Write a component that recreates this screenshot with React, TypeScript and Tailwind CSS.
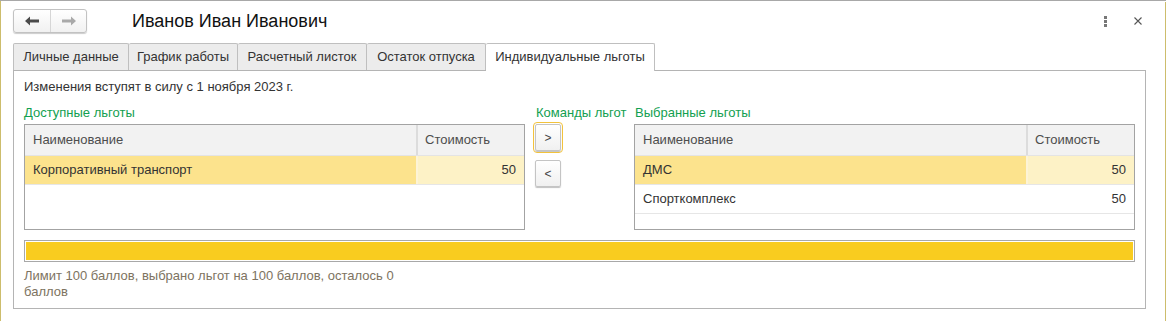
import React from "react";

const font = "font-['Liberation_Sans',Arial,sans-serif]";

function BackIcon({ color }: { color: string }) {
  return (
    <svg width="14" height="10" viewBox="0 0 14 10">
      <path d="M0 5 L5 0.5 L5 3.5 L14 3.5 L14 6.5 L5 6.5 L5 9.5 Z" fill={color} />
    </svg>
  );
}
function FwdIcon({ color }: { color: string }) {
  return (
    <svg width="14" height="10" viewBox="0 0 14 10">
      <path d="M14 5 L9 0.5 L9 3.5 L0 3.5 L0 6.5 L9 6.5 L9 9.5 Z" fill={color} />
    </svg>
  );
}

const tabs = [
  { t: "Личные данные", w: "w-[116px]" },
  { t: "График работы", w: "w-[109px]" },
  { t: "Расчетный листок", w: "w-[129px]" },
  { t: "Остаток отпуска", w: "w-[119px]" },
];

type Row = { name: string; cost: string; sel?: boolean };

function Table({ rows }: { rows: Row[] }) {
  return (
    <div className="w-[501px] h-[106px] border border-[#a3a3a3] bg-white flex flex-col">
      <div className="flex h-[31px] bg-[#f2f2f2] border-b border-[#e4e4e4] text-[#4d4d4d]">
        <div className="w-[393px] pl-[8px] flex items-center border-r-2 border-[#dcdcdc]">Наименование</div>
        <div className="flex-1 pl-[7px] flex items-center">Стоимость</div>
      </div>
      {rows.map((r, i) => (
        <div key={i} className="flex h-[29px] border-b border-[#e6e6e6] text-[#333]">
          <div className={`w-[393px] pl-[8px] flex items-center border-r-2 ${r.sel ? "bg-[#fce38d] border-[#fdf4d6]" : "bg-white border-white"}`}>{r.name}</div>
          <div className={`flex-1 pr-[8px] flex items-center justify-end ${r.sel ? "bg-[#fdf2c6]" : "bg-white"}`}>{r.cost}</div>
        </div>
      ))}
    </div>
  );
}

function SmallBtn({ label, focus }: { label: string; focus?: boolean }) {
  return (
    <div
      className={`w-[26px] h-[27px] rounded-[2px] border border-[#c4c4c4] bg-gradient-to-b from-white to-[#f0f0f0] shadow-[0_1px_1px_rgba(0,0,0,0.25)] flex items-center justify-center text-[#444] text-[12px] ${
        focus ? "outline outline-1 outline-[#f2c23c] outline-offset-[1px]" : ""
      }`}
    >
      {label}
    </div>
  );
}

export default function App() {
  return (
    <div className={`${font} text-[13px] w-[1166px] h-[321px] bg-white relative overflow-hidden`}>
      <div className="absolute left-0 top-0 w-[1166px] h-px bg-[#a8a8a8]" />
      <div className="absolute left-0 top-px w-px h-[320px] bg-[#cdbd6c]" />
      <div className="absolute left-[1165px] top-[2px] w-px h-[319px] bg-[#cdbd6c]" />

      <div className="flex flex-col">
        {/* header */}
        <div className="h-[43px] pt-[9px] flex items-start">
          <div className="ml-[13px] flex h-[24px] rounded-[3px] border border-[#c2c2c2] bg-gradient-to-b from-white to-[#f1f1f1] shadow-[0_1px_1px_rgba(0,0,0,0.2)]">
            <div className="w-[37px] flex items-center justify-center border-r border-[#d6d6d6]">
              <BackIcon color="#4a4a4a" />
            </div>
            <div className="w-[35px] flex items-center justify-center">
              <FwdIcon color="#a9a9a9" />
            </div>
          </div>
          <div className="ml-[45px] h-[24px] flex items-center text-[18px] text-[#111]">Иванов Иван Иванович</div>
          <div className="flex-1" />
          <div className="h-[24px] flex flex-col items-center justify-center gap-[1px] mr-[27px]">
            <div className="w-[3px] h-[3px] bg-[#777]" />
            <div className="w-[3px] h-[3px] bg-[#777]" />
            <div className="w-[3px] h-[3px] bg-[#777]" />
          </div>
          <div className="h-[24px] flex items-center mr-[24px]">
            <svg width="8" height="8" viewBox="0 0 8 8">
              <path d="M0.5 0.5 L7.5 7.5 M7.5 0.5 L0.5 7.5" stroke="#555" strokeWidth="1.1" />
            </svg>
          </div>
        </div>

        {/* tabs */}
        <div className="ml-[13px] flex items-end h-[27px] relative z-10">
          {tabs.map((t, i) => (
            <div
              key={i}
              className={`${t.w} h-[27px] bg-[#ececec] border-t border-r border-[#bfbfbf] ${i === 0 ? "border-l" : ""} rounded-t-[2px] flex items-center justify-center text-[#333]`}
            >
              {t.t}
            </div>
          ))}
          <div className="w-[169px] h-[28px] -mb-px bg-white border-t border-r border-[#bfbfbf] rounded-t-[2px] flex items-center justify-center text-[#333] pb-px">
            Индивидуальные льготы
          </div>
        </div>

        {/* panel */}
        <div className="ml-[13px] w-[1133px] h-[239px] border border-[#b4b4b4] pl-[10px] pr-[10px] pt-[8px] flex flex-col">
          <div className="h-[16px] leading-[16px] text-[#333]">Изменения вступят в силу с 1 ноября 2023 г.</div>
          <div className="flex mt-[10px]">
            <div className="flex flex-col">
              <div className="h-[16px] leading-[16px] text-[#12a050] mb-[3px]">Доступные льготы</div>
              <Table rows={[{ name: "Корпоративный транспорт", cost: "50", sel: true }]} />
            </div>
            <div className="w-[109px] flex flex-col">
              <div className="h-[16px] leading-[16px] text-[#12a050] pl-[11px]">Команды льгот</div>
              <div className="pl-[10px] mt-[3px] flex flex-col gap-[9px]">
                <SmallBtn label=">" focus />
                <SmallBtn label="<" />
              </div>
            </div>
            <div className="flex flex-col">
              <div className="h-[16px] leading-[16px] text-[#12a050] mb-[3px] pl-px">Выбранные льготы</div>
              <Table
                rows={[
                  { name: "ДМС", cost: "50", sel: true },
                  { name: "Спорткомплекс", cost: "50" },
                ]}
              />
            </div>
          </div>
          <div className="mt-[10px] w-[1111px] h-[22px] border border-[#a8a8a8] p-px">
            <div className="w-full h-full bg-[#f9cc1f]" />
          </div>
          <div className="mt-[6px] leading-[16px] text-[#7d7361]">
            Лимит 100 баллов, выбрано льгот на 100 баллов, осталось 0
            <br />
            баллов
          </div>
        </div>
      </div>
    </div>
  );
}
